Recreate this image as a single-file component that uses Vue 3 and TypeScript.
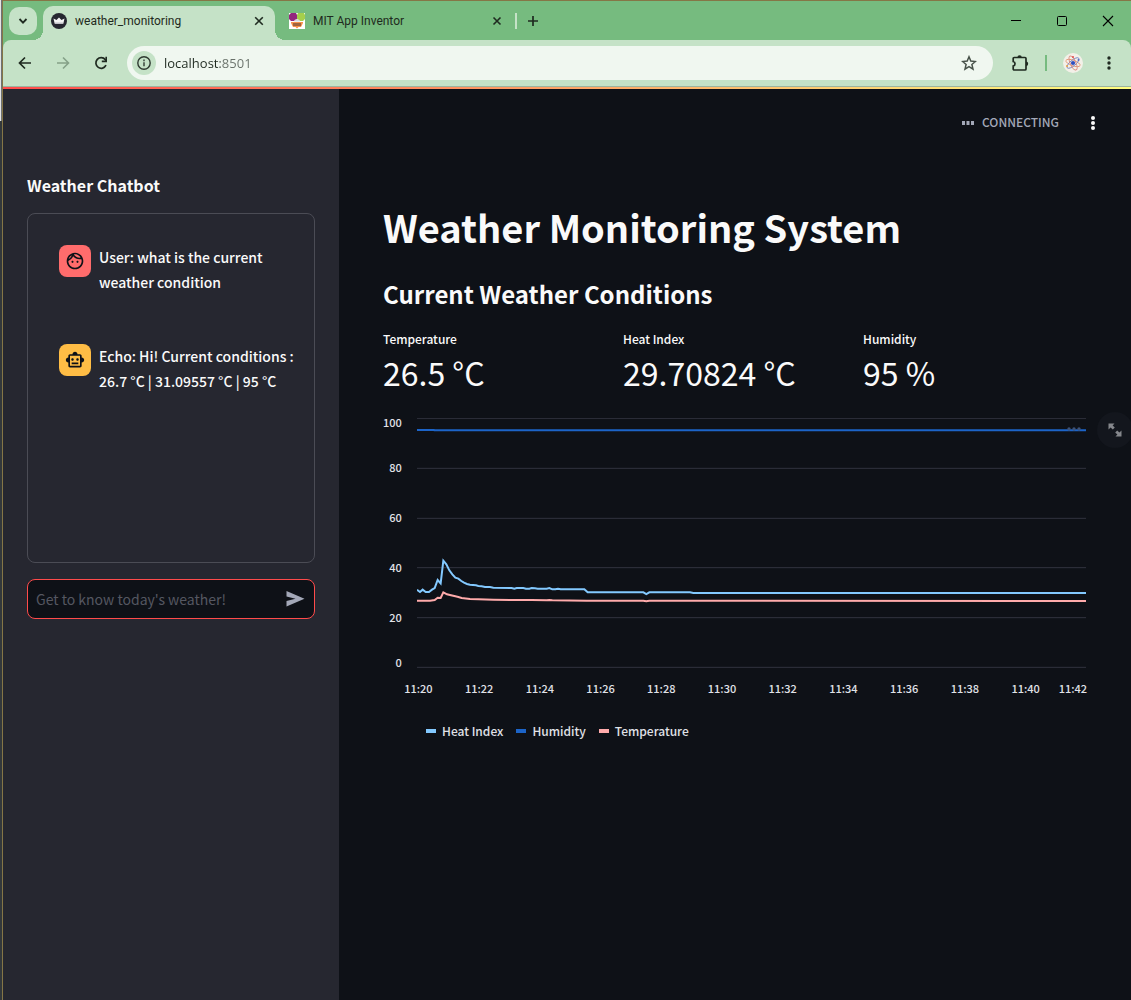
<script setup lang="ts">
import { ref } from 'vue'

interface Message {
  role: 'user' | 'bot'
  text: string
}

interface Metric {
  label: string
  value: string
}

interface Series {
  name: string
  color: string
  points: string
}

const address = ref('localhost:8501')
const question = ref('')

const messages: Message[] = [
  { role: 'user', text: 'User: what is the current weather condition' },
  { role: 'bot', text: 'Echo: Hi! Current conditions : 26.7 °C | 31.09557 °C | 95 °C' },
]

const metrics: Metric[] = [
  { label: 'Temperature', value: '26.5 °C' },
  { label: 'Heat Index', value: '29.70824 °C' },
  { label: 'Humidity', value: '95 %' },
]

const yTicks = [100, 80, 60, 40, 20, 0]
const gridLines = [1, 151, 301, 449, 599, 748]
const xTicks = Array.from({ length: 12 }, (_, i) => `11:${20 + i * 2}`)

const series: Series[] = [
  {
    name: 'Heat Index',
    color: '#83c9ff',
    points:
      '0,515 9,522 17,515 26,522 36,522 45,515 53,510 62,486 71,496 79,428 88,439 97,457 106,469 115,479 124,482 133,489 141,494 150,498 159,500 177,502 184,504 194,505 204,507 219,507 229,509 284,510 292,512 299,510 319,510 327,512 337,512 344,510 354,511 362,512 389,512 397,510 406,514 415,514 423,512 431,514 502,514 512,523 679,523 688,528 697,523 819,523 829,525 2007,525',
  },
  {
    name: 'Humidity',
    color: '#1c64c8',
    points: '0,36 51,36 52,37 2007,37',
  },
  {
    name: 'Temperature',
    color: '#ffabab',
    points:
      '0,548 39,548 53,546 62,539 71,540 79,523 90,529 102,532 115,535 124,537 134,540 159,543 184,544 229,545 284,546 344,546 389,547 397,546 406,547 509,548 679,548 688,550 697,548 2007,549',
  },
]
</script>

<template>
  <div class="desktop">
    <div class="window">
      <div class="chrome">
        <header class="tabs">
          <button class="tab-search" aria-label="Search tabs">
            <svg width="10" height="10" viewBox="0 0 10 10"><path d="M1.500 3l3.500 3.600L8.500 3" fill="none" stroke="#1f2a20" stroke-width="1.800" /></svg>
          </button>
          <div class="tab active">
            <svg class="favicon" width="16" height="16" viewBox="0 0 16 16">
              <circle cx="8" cy="8" r="8" fill="#262730" />
              <path d="M2.500 5.500l3 1.500L8 4.600l2.500 2.400 3-1.500-1.200 5.200H3.700z" fill="#f4f4f4" />
              <path d="M3.900 9.600h8.200l-.3 1.400H4.200z" fill="#c0c0c6" />
            </svg>
            <span class="tab-title">weather_monitoring</span>
            <button class="close" aria-label="Close weather_monitoring">
              <svg width="10" height="10" viewBox="0 0 10 10"><path d="M1.200 1.200l7.600 7.600M8.800 1.200L1.200 8.800" stroke="#1f2a20" stroke-width="1.600" /></svg>
            </button>
          </div>
          <div class="tab idle">
            <svg class="favicon" width="16" height="16" viewBox="0 0 16 16">
              <path d="M0 0h16v16H0z" fill="#fff" />
              <path d="M2 0h5l1 2v4L5 8H2L0 6V2z" fill="#93277e" />
              <path d="M9 0h6l1 2v4l-2 2h-3L8 6V2z" fill="#a5cf4c" />
              <path d="M6 6.500h4l1 2H5z" fill="#d5d9de" />
              <path d="M2 9h12v1l-2 4H9.500L8 15.500 6.500 14H4l-2-4z" fill="#f7924a" />
              <path d="M4 10h8v3H4z" fill="#a2643c" />
            </svg>
            <span class="tab-title">MIT App Inventor</span>
            <button class="close" aria-label="Close MIT App Inventor">
              <svg width="10" height="10" viewBox="0 0 10 10"><path d="M1.500 1.500l7 7M8.500 1.500l-7 7" stroke="#1f2a20" stroke-width="1.600" /></svg>
            </button>
          </div>
          <span class="tab-divider"></span>
          <button class="new-tab" aria-label="New tab">
            <svg width="12" height="12" viewBox="0 0 12 12"><path d="M6 1v10M1 6h10" stroke="#1f2a20" stroke-width="1.700" /></svg>
          </button>
          <div class="window-controls">
            <button aria-label="Minimize"><svg width="12" height="12" viewBox="0 0 12 12"><path d="M1 5.500h10" stroke="#000" /></svg></button>
            <button aria-label="Maximize"><svg width="12" height="12" viewBox="0 0 12 12"><rect x="1.500" y="1.500" width="9" height="9" rx="1" fill="none" stroke="#000" /></svg></button>
            <button aria-label="Close window"><svg width="12" height="12" viewBox="0 0 12 12"><path d="M1 1l10 10M11 1L1 11" stroke="#000" stroke-width="1.100" /></svg></button>
          </div>
        </header>

        <nav class="toolbar">
          <button class="nav" aria-label="Back">
            <svg width="14" height="14" viewBox="0 0 14 14"><path d="M13 7H2M7 1.500L1.500 7 7 12.500" fill="none" stroke="#1f2a20" stroke-width="1.700" /></svg>
          </button>
          <button class="nav" aria-label="Forward" disabled>
            <svg width="14" height="14" viewBox="0 0 14 14"><path d="M1 7h11M7 1.500L12.500 7 7 12.500" fill="none" stroke="#85a188" stroke-width="1.600" /></svg>
          </button>
          <button class="nav" aria-label="Reload">
            <svg width="14" height="14" viewBox="0 0 14 14"><path d="M12 9.200A5.300 5.300 0 1 1 11.300 3.600L12.400 5" fill="none" stroke="#1f2a20" stroke-width="1.700" /><path d="M13 .8v5.400H7.800V4.600h3.600V.8z" fill="#1f2a20" /></svg>
          </button>
          <div class="omnibox">
            <button class="site-info" aria-label="View site information">
              <svg width="14" height="14" viewBox="0 0 14 14"><circle cx="7" cy="7" r="6.200" fill="none" stroke="#2f3a31" stroke-width="1.400" /><path d="M7 6.200v4M7 3.600v1.600" stroke="#2f3a31" stroke-width="1.400" /></svg>
            </button>
            <input v-model="address" class="address" aria-label="Address" spellcheck="false" />
            <button class="bookmark" aria-label="Bookmark this tab">
              <svg width="16" height="16" viewBox="0 0 16 16"><path d="M8 1.800l1.800 4.300 4.600.4-3.500 3 1.100 4.600L8 11.700l-4 2.400 1.100-4.600-3.500-3 4.600-.4z" fill="none" stroke="#48524a" stroke-width="1.500" /></svg>
            </button>
          </div>
          <button class="extensions" aria-label="Extensions">
            <svg width="18" height="18" viewBox="0 0 18 18">
              <path d="M3.200 3.500H14a1 1 0 0 1 1 1V15a1 1 0 0 1-1 1H3.200a1 1 0 0 1-1-1V12a2.300 2.300 0 0 0 0-4.500v-3a1 1 0 0 1 1-1z" fill="none" stroke="#1f2a20" stroke-width="1.700" />
              <path d="M6.400 3.500a2.200 2.200 0 0 1 4.400 0zM15 7.600a2.200 2.200 0 0 1 0 4.400z" fill="#1f2a20" />
            </svg>
          </button>
          <span class="tool-divider"></span>
          <button class="profile" aria-label="Profile">
            <svg width="20" height="20" viewBox="0 0 20 20">
              <circle cx="10" cy="10" r="10" fill="#f3f0e8" />
              <g fill="none" stroke-width=".9">
                <ellipse cx="10" cy="10" rx="7.500" ry="2.800" stroke="#e49a78" transform="rotate(20 10 10)" />
                <ellipse cx="10" cy="10" rx="7.500" ry="2.800" stroke="#7787c6" transform="rotate(-40 10 10)" />
                <ellipse cx="10" cy="10" rx="7.500" ry="2.800" stroke="#d98b80" transform="rotate(65 10 10)" />
              </g>
              <circle cx="10" cy="10" r="2.100" fill="#2d4fc0" />
              <circle cx="10" cy="4" r="1" fill="#e05050" />
              <circle cx="4" cy="13" r="1" fill="#eda23c" />
              <circle cx="15.500" cy="7" r="1" fill="#5069c5" />
            </svg>
          </button>
          <button class="menu" aria-label="Browser menu">
            <svg width="4" height="14" viewBox="0 0 4 14" fill="#1f2a20"><circle cx="2" cy="2" r="1.700" /><circle cx="2" cy="7" r="1.700" /><circle cx="2" cy="12" r="1.700" /></svg>
          </button>
        </nav>
      </div>

      <div class="decoration"></div>

      <div class="app">
        <aside class="sidebar">
          <h3>Weather Chatbot</h3>
          <div class="chat">
            <div v-for="message in messages" :key="message.text" class="message" :class="message.role">
              <span class="avatar">
                <svg v-if="message.role === 'user'" width="20" height="20" viewBox="0 0 24 24" fill="#0e1117">
                  <path d="M10.250 13c0 .69-.56 1.250-1.250 1.250S7.750 13.690 7.750 13s.56-1.250 1.250-1.250 1.250.56 1.250 1.250zM15 11.750c-.69 0-1.250.56-1.250 1.250s.56 1.250 1.250 1.250 1.250-.56 1.250-1.250-.56-1.250-1.250-1.250zM22 12c0 5.520-4.480 10-10 10S2 17.520 2 12 6.480 2 12 2s10 4.480 10 10zM10.660 4.120C12.060 6.440 14.600 8 17.500 8c.46 0 .91-.05 1.340-.12C17.440 5.560 14.900 4 12 4c-.46 0-.91.05-1.340.12zM4.420 9.470c1.710-.97 3.030-2.550 3.660-4.440C6.370 6 5.050 7.580 4.420 9.470zM20 12c0-.78-.12-1.530-.33-2.240-.7.150-1.420.24-2.170.24-3.130 0-5.920-1.440-7.760-3.690C8.690 8.870 6.600 10.880 4 11.860c.01.04 0 .09 0 .14 0 4.410 3.590 8 8 8s8-3.590 8-8z" />
                </svg>
                <svg v-else width="20" height="20" viewBox="0 0 24 24" fill="#0e1117">
                  <path d="M20 9V7c0-1.100-.9-2-2-2h-3c0-1.660-1.340-3-3-3S9 3.340 9 5H6c-1.100 0-2 .9-2 2v2c-1.660 0-3 1.340-3 3s1.340 3 3 3v4c0 1.100.9 2 2 2h12c1.100 0 2-.9 2-2v-4c1.660 0 3-1.340 3-3s-1.340-3-3-3zm-2 10H6V7h12v12zm-9-6c-.83 0-1.500-.67-1.500-1.500S8.170 10 9 10s1.500.67 1.500 1.500S9.830 13 9 13zm7.500-1.500c0 .83-.67 1.500-1.500 1.500s-1.500-.67-1.500-1.500.67-1.500 1.500-1.500 1.500.67 1.500 1.500zM8 15h8v2H8v-2z" />
                </svg>
              </span>
              <p>{{ message.text }}</p>
            </div>
          </div>
          <form class="ask" @submit.prevent>
            <input v-model="question" placeholder="Get to know today's weather!" aria-label="Get to know today's weather!" />
            <button aria-label="Send">
              <svg width="20" height="18" viewBox="0 0 20 18"><path d="M1.500 1L19.500 8.700 1.500 16.500v-5.600l9-2.200-9-2.100z" fill="#a3a8b8" /></svg>
            </button>
          </form>
        </aside>

        <main class="main">
          <div class="status-bar">
            <svg width="12" height="4" viewBox="0 0 12 4" fill="#a3a8b8"><path d="M0 0h3v4H0zM4.500 0h3v4h-3zM9 0h3v4H9z" /></svg>
            <span>CONNECTING</span>
            <button aria-label="Main menu">
              <svg width="4" height="14" viewBox="0 0 4 14" fill="#fafafa"><circle cx="2" cy="2" r="2" /><circle cx="2" cy="7" r="2" /><circle cx="2" cy="12" r="2" /></svg>
            </button>
          </div>

          <h1>Weather Monitoring System</h1>
          <h2>Current Weather Conditions</h2>

          <dl class="metrics">
            <div v-for="metric in metrics" :key="metric.label">
              <dt>{{ metric.label }}</dt>
              <dd>{{ metric.value }}</dd>
            </div>
          </dl>

          <section class="chart" aria-label="Weather history">
            <div class="y-axis">
              <span v-for="tick in yTicks" :key="tick">{{ tick }}</span>
            </div>
            <div class="plot">
              <svg class="lines" viewBox="0 0 2007 750" preserveAspectRatio="none">
                <line v-for="y in gridLines" :key="y" class="grid-line" x1="0" :y1="y" x2="2007" :y2="y" />
                <polyline v-for="line in series" :key="line.name" class="series-line" :points="line.points" :stroke="line.color" />
              </svg>
              <button class="chart-menu" aria-label="Chart actions">
                <svg width="14" height="4" viewBox="0 0 14 4" fill="#3c5278"><circle cx="2" cy="2" r="1.700" /><circle cx="7" cy="2" r="1.700" /><circle cx="12" cy="2" r="1.700" /></svg>
              </button>
            </div>
            <div class="x-axis">
              <span v-for="tick in xTicks" :key="tick">{{ tick }}</span>
            </div>
            <ul class="legend">
              <li v-for="line in series" :key="line.name">
                <i :style="{ background: line.color }"></i>{{ line.name }}
              </li>
            </ul>
            <button class="fullscreen" aria-label="View fullscreen">
              <svg width="14" height="14" viewBox="0 0 14 14" fill="#85878c"><path d="M.5.500h6L4.600 2.400l2.200 2.200-2 2L2.600 4.400.5 6.500zM13.500 13.500h-6l1.900-1.900-2.200-2.200 2-2 2.200 2.200 2.100-2.100z" /></svg>
            </button>
          </section>
        </main>
      </div>
    </div>
  </div>
</template>

<style>
body {
  background: #0e1117;
}
</style>

<style scoped>
.desktop {
  padding-left: 2px;
  background: linear-gradient(90deg, #e4e4e4 1px, #6e7275 1px) 0 0 / 2px 121px no-repeat #33383b;
}

.window {
  box-sizing: border-box;
  display: flex;
  flex-direction: column;
  min-height: 100vh;
  overflow: hidden;
  border-top: 1px solid #857646;
  border-left: 1px solid #857646;
  font-family: "Noto Sans CJK JP", "Noto Sans CJK SC", sans-serif;
  color: #fafafa;
}

button {
  display: flex;
  align-items: center;
  justify-content: center;
  flex: none;
  padding: 0;
  border: 0;
  background: none;
  color: inherit;
  font: inherit;
}

svg {
  display: block;
  flex: none;
}

.chrome {
  background: #76bb7f;
}

.tabs {
  display: flex;
  align-items: center;
  height: 39px;
  padding-left: 6px;
  font: 12px/16px Roboto, sans-serif;
  color: #1f2a20;
}

.tab-search {
  width: 28px;
  height: 28px;
  border-radius: 10px;
  background: #c5e2c7;
}

.tab {
  box-sizing: border-box;
  display: flex;
  align-items: center;
}

.tab-title {
  flex: 1;
  margin-left: 8px;
}

.tab.active {
  position: relative;
  align-self: flex-end;
  width: 232px;
  height: 34px;
  margin-left: 6px;
  padding: 0 11px 4px 8px;
  border-radius: 10px 10px 0 0;
  background: #c5e2c7;
}

.tab.active::before,
.tab.active::after {
  content: "";
  position: absolute;
  bottom: 0;
  width: 10px;
  height: 10px;
}

.tab.active::before {
  right: 100%;
  background: radial-gradient(circle at 0 0, transparent 10px, #c5e2c7 10px);
}

.tab.active::after {
  left: 100%;
  background: radial-gradient(circle at 100% 0, transparent 10px, #c5e2c7 10px);
}

.tab.idle {
  width: 240px;
  padding: 0 13px 0 14px;
}

.close {
  width: 10px;
  height: 16px;
}

.tab-divider {
  width: 2px;
  height: 16px;
  background: #c5e2c7;
}

.new-tab {
  width: 32px;
  height: 28px;
}

.window-controls {
  display: flex;
  margin-left: auto;
}

.window-controls button {
  width: 46px;
  height: 38px;
}

.toolbar {
  display: flex;
  align-items: center;
  height: 46px;
  padding: 0 8px 0 3px;
  border-bottom: 1px solid #9db5a0;
  border-radius: 8px 8px 0 0;
  background: #c5e2c7;
}

.nav {
  width: 38px;
  height: 34px;
}

.omnibox {
  display: flex;
  flex: 1;
  align-items: center;
  height: 34px;
  margin-left: 7px;
  padding: 0 16px 0 5px;
  border-radius: 17px;
  background: #f0f7f0;
}

.site-info {
  width: 24px;
  height: 24px;
  border-radius: 12px;
  background: #c5e2c7;
}

.address {
  flex: 1;
  min-width: 0;
  height: 20px;
  margin-left: 8px;
  padding: 0;
  border: 0;
  outline: 0;
  background: linear-gradient(90deg, #1f2a20 56px, #687069 56px);
  background-clip: text;
  color: transparent;
  font: 13px/20px "Open Sans", sans-serif;
}

.extensions {
  width: 28px;
  height: 28px;
  margin-left: 13px;
}

.tool-divider {
  width: 2px;
  height: 16px;
  margin: 0 16px 0 11px;
  background: #76bb7f;
}

.menu {
  width: 28px;
  height: 28px;
  margin-left: 12px;
}

.decoration {
  height: 2px;
  background: linear-gradient(90deg, #ff4b4b, #fffd80);
}

.app {
  display: flex;
  flex: 1;
}

.sidebar {
  box-sizing: border-box;
  flex: none;
  width: 336px;
  padding: 84px 24px 24px;
  background: #262730;
}

h1,
h2,
h3,
p,
dl,
dd,
ul {
  margin: 0;
  padding: 0;
}

h3 {
  font-size: 16px;
  font-weight: 700;
  line-height: 24px;
}

.chat {
  box-sizing: border-box;
  display: flex;
  flex-direction: column;
  gap: 17px;
  height: 350px;
  margin-top: 16px;
  padding: 15px;
  border: 1px solid #4b4c55;
  border-radius: 8px;
}

.message {
  display: flex;
  gap: 8px;
  padding: 16px 0 16px 16px;
  border-radius: 8px;
}

.avatar {
  display: flex;
  align-items: center;
  justify-content: center;
  flex: none;
  width: 32px;
  height: 32px;
  border-radius: 8px;
  background: #ffbd45;
}

.user .avatar {
  background: #ff6c6c;
}

.message p {
  margin-right: -8px;
  font-size: 14px;
  font-weight: 500;
  line-height: 25px;
}

.ask {
  box-sizing: border-box;
  display: flex;
  align-items: center;
  height: 40px;
  margin-top: 16px;
  padding: 0 9px 0 8px;
  border: 1px solid #ff4b4b;
  border-radius: 8px;
  background: #0e1117;
}

.ask input {
  flex: 1;
  min-width: 0;
  height: 24px;
  padding: 0;
  border: 0;
  outline: 0;
  background: none;
  color: #fafafa;
  font-family: inherit;
  font-size: 14px;
}

.ask input::placeholder {
  color: #555761;
}

.main {
  flex: 1;
  min-width: 0;
  padding: 0 44px;
  background: #0e1117;
}

.status-bar {
  display: flex;
  align-items: center;
  justify-content: flex-end;
  height: 68px;
  margin-right: -18px;
  color: #a3a8b8;
  font-size: 12px;
  font-weight: 500;
  line-height: 18px;
}

.status-bar span {
  margin: 0 22px 2px 8px;
}

.status-bar button {
  width: 24px;
  height: 24px;
}

h1 {
  margin-top: 44px;
  font-size: 38px;
  font-weight: 700;
  line-height: 52px;
}

h2 {
  margin-top: 24px;
  font-size: 24px;
  font-weight: 700;
  line-height: 34px;
}

.metrics {
  display: grid;
  grid-template-columns: repeat(3, 1fr);
  gap: 16px;
  margin-top: 18px;
}

dt {
  font-size: 12px;
  font-weight: 500;
  line-height: 20px;
}

dd {
  font-size: 32px;
  line-height: 46px;
  white-space: nowrap;
}

.chart {
  position: relative;
  display: grid;
  grid-template-columns: 19px minmax(0, 1fr);
  column-gap: 15px;
  margin-top: 23px;
  padding-right: 1px;
  color: #e0e2e8;
  font-size: 11px;
  font-weight: 500;
  line-height: 10px;
}

.y-axis {
  display: grid;
  grid-template-rows: 24px repeat(4, 50px) 24px;
  align-items: center;
  height: 248px;
  padding-right: 1px;
  line-height: 8px;
  text-align: right;
}

.y-axis span:first-child {
  align-self: start;
}

.y-axis span:last-child {
  align-self: end;
}

.plot {
  position: relative;
}

.lines {
  width: 100%;
  height: 250px;
}

.grid-line {
  stroke: #31333f;
  stroke-width: 1px;
  vector-effect: non-scaling-stroke;
}

.series-line {
  fill: none;
  stroke-width: 2px;
  vector-effect: non-scaling-stroke;
}

.chart-menu {
  position: absolute;
  top: 9px;
  right: 5px;
}

.x-axis {
  display: grid;
  grid-column: 2;
  grid-template-columns: repeat(11, minmax(0, 1fr)) 31px;
  margin: 15px -1px 0 -29px;
  text-align: center;
}

.x-axis span:last-child {
  text-align: right;
}

.legend {
  display: flex;
  grid-column: 2;
  gap: 13px;
  margin: 28px 0 0 9px;
  list-style: none;
  font-size: 12px;
  line-height: 20px;
}

.legend li {
  display: flex;
  align-items: center;
  gap: 6px;
}

.legend i {
  width: 10px;
  height: 4px;
}

.fullscreen {
  position: absolute;
  top: -6px;
  right: -46px;
  width: 36px;
  height: 36px;
  border-radius: 18px;
  background: #13161d;
}
</style>
